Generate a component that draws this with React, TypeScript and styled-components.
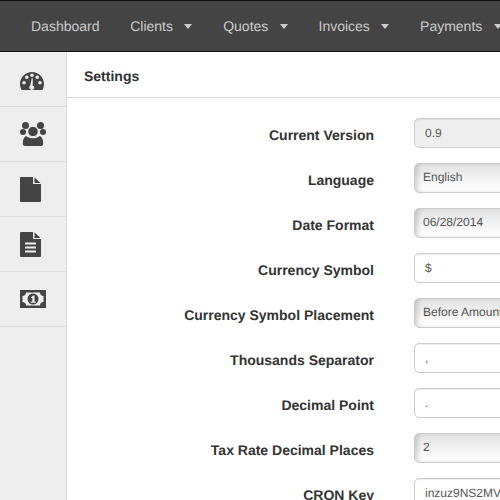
import * as React from "react";
import styled, { createGlobalStyle } from "styled-components";

const GlobalStyle = createGlobalStyle`
    html, body {
        margin: 0;
        padding: 0;
        background: #fff;
        font-family: "Liberation Sans", Arial, sans-serif;
        text-rendering: geometricPrecision;
    }
`;

const Page = styled.div`
    width: 500px;
    height: 500px;
    overflow: hidden;
    display: flex;
    flex-direction: column;
`;

const Navbar = styled.div`
    height: 50px;
    flex: none;
    display: flex;
    align-items: center;
    gap: 30.7px;
    padding-left: 31px;
    background: #444;
    border-top: 1px solid #111;
    border-bottom: 1px solid #111;
    white-space: nowrap;
`;

const NavItem = styled.div`
    display: flex;
    align-items: center;
    gap: 11.5px;
    flex: none;
    font-size: 14px;
    color: #ccc;
`;

const Caret = styled.span`
    width: 0;
    height: 0;
    margin-top: 1px;
    border-left: 4.5px solid transparent;
    border-right: 4.5px solid transparent;
    border-top: 5px solid #ccc;
`;

const Body = styled.div`
    flex: 1;
    display: flex;
    min-height: 0;
`;

const Sidebar = styled.div`
    width: 66px;
    flex: none;
    background: #eee;
    border-right: 1px solid #ddd;
`;

const SideItem = styled.div`
    height: 54px;
    display: flex;
    align-items: center;
    padding-left: 20px;
    border-bottom: 1px solid #ddd;
    color: #444;
`;

const Main = styled.div`
    flex: 1;
    min-width: 0;
`;

const Header = styled.div`
    height: 43px;
    display: flex;
    align-items: center;
    padding: 2px 0 0 17px;
    border-bottom: 1px solid #ddd;
    font-size: 14px;
    font-weight: bold;
    color: #333;
`;

const Form = styled.div`
    display: flex;
    flex-direction: column;
    gap: 15px;
    padding-top: 20px;
`;

const Row = styled.div`
    display: flex;
    align-items: center;
    height: 30px;
    gap: 40px;
`;

const Label = styled.div`
    width: 307px;
    flex: none;
    padding-top: 4px;
    text-align: right;
    font-size: 14px;
    font-weight: bold;
    color: #333;
    white-space: nowrap;
`;

const Field = styled.div<{ $kind: "input" | "readonly" | "select" }>`
    width: 200px;
    height: 30px;
    flex: none;
    display: flex;
    align-items: center;
    box-sizing: border-box;
    padding-left: ${(p) => (p.$kind === "select" ? "8px" : "10px")};
    padding-bottom: ${(p) => (p.$kind === "select" ? "2px" : "0")};
    border: 1px solid #ccc;
    border-radius: 5px;
    font-size: 12px;
    color: #555;
    white-space: nowrap;
    overflow: hidden;
    background: ${(p) =>
        p.$kind === "input"
            ? "#fff"
            : p.$kind === "readonly"
              ? "#eee"
              : "linear-gradient(to bottom, #e2e2e2, #fcfcfc 85%)"};
    box-shadow: ${(p) =>
        p.$kind === "select"
            ? "inset 4px 0 4px -1px rgba(0, 0, 0, 0.14)"
            : "inset 0 1px 1px rgba(0, 0, 0, 0.075)"};
`;

const Icon = styled.svg`
    display: block;
    fill: currentColor;
`;

const Gauge = styled(Icon)`
    margin-top: 3px;
`;

const GaugeIcon = () => (
    <Gauge width="24" height="18" viewBox="0 0 24 18">
        <path
            fillRule="evenodd"
            d="M12 0C5.4 0 0 5.4 0 12c0 2.2.6 4.2 1.6 6h20.8c1-1.8 1.6-3.800 1.600-6C24 5.400 18.600 0 12 0zM4 12.500a1.800 1.800 0 1 1 0-3.600 1.800 1.800 0 0 1 0 3.600zM6.800 7a1.800 1.800 0 1 1 0-3.600 1.800 1.800 0 0 1 0 3.600zM12 5a1.800 1.800 0 1 1 0-3.600A1.800 1.800 0 0 1 12 5zm2.300 10.500a2.500 2.500 0 1 1-3.900-2.200l1.300-7 1.100.2-.1 7.100a2.500 2.500 0 0 1 1.600 1.900zM17.200 7a1.800 1.800 0 1 1 0-3.600 1.800 1.800 0 0 1 0 3.600zM20 12.500a1.800 1.800 0 1 1 0-3.600 1.800 1.800 0 0 1 0 3.600z"
        />
    </Gauge>
);

const GroupIcon = () => (
    <Icon width="26" height="24" viewBox="0 0 26 24">
        <circle cx="5.500" cy="3.500" r="3.500" />
        <circle cx="20.500" cy="3.500" r="3.500" />
        <circle cx="3" cy="10" r="3" />
        <circle cx="23" cy="10" r="3" />
        <circle cx="13" cy="9.500" r="5.200" stroke="#eee" strokeWidth="1" />
        <path d="M5 24c-1.500 0-2.200-1-2.200-2.500 0-3.500 1-6.500 3.400-7.500 1.600 1.500 3.900 2.300 6.800 2.300s5.200-.8 6.800-2.300c2.400 1 3.400 4 3.400 7.500 0 1.500-.7 2.500-2.200 2.500z" />
    </Icon>
);

const FileIcon = () => (
    <Icon width="21" height="25" viewBox="0 0 21 25">
        <path d="M0 1a1 1 0 0 1 1-1h12v7h8v17a1 1 0 0 1-1 1H1a1 1 0 0 1-1-1z" />
        <path d="M14.500 0.500l6 5.500h-6z" />
    </Icon>
);

const FileTextIcon = () => (
    <Icon width="21" height="25" viewBox="0 0 21 25">
        <path
            fillRule="evenodd"
            d="M0 1a1 1 0 0 1 1-1h12v7h8v17a1 1 0 0 1-1 1H1a1 1 0 0 1-1-1zM5 10.500v2h11v-2zM5 14.500v2h11v-2zM5 18.500v2h11v-2z"
        />
        <path d="M14.500 0.500l6 5.500h-6z" />
    </Icon>
);

const MoneyIcon = () => (
    <Icon width="26" height="18" viewBox="0 0 26 18">
        <path
            fillRule="evenodd"
            d="M0 0h26v18H0zM6 2.500c0 2-1.500 3.500-3.500 3.500v6C4.500 12 6 13.500 6 15.500h14c0-2 1.500-3.500 3.500-3.500V6C21.500 6 20 4.500 20 2.500z"
        />
        <path
            fillRule="evenodd"
            d="M13 3.500a5.500 5.500 0 1 0 0 11 5.500 5.500 0 0 0 0-11zM11 7.300l2.200-1.800h1.300v6h1.300v1.200h-5v-1.200h1.500V7.600l-.8.600z"
        />
    </Icon>
);

const menus = [
    { name: "Dashboard", caret: false },
    { name: "Clients", caret: true },
    { name: "Quotes", caret: true },
    { name: "Invoices", caret: true },
    { name: "Payments", caret: true },
];

const sideIcons = [GaugeIcon, GroupIcon, FileIcon, FileTextIcon, MoneyIcon];

type FieldKind = "input" | "readonly" | "select";

const settings: { label: string; value: string; kind: FieldKind }[] = [
    { label: "Current Version", value: "0.9", kind: "readonly" },
    { label: "Language", value: "English", kind: "select" },
    { label: "Date Format", value: "06/28/2014", kind: "select" },
    { label: "Currency Symbol", value: "$", kind: "input" },
    { label: "Currency Symbol Placement", value: "Before Amount", kind: "select" },
    { label: "Thousands Separator", value: ",", kind: "input" },
    { label: "Decimal Point", value: ".", kind: "input" },
    { label: "Tax Rate Decimal Places", value: "2", kind: "select" },
    { label: "CRON Key", value: "inzuz9NS2MVkL4", kind: "input" },
];

export default function App() {
    return (
        <Page>
            <GlobalStyle />
            <Navbar>
                {menus.map((m) => (
                    <NavItem key={m.name}>
                        {m.name}
                        {m.caret && <Caret />}
                    </NavItem>
                ))}
            </Navbar>
            <Body>
                <Sidebar>
                    {sideIcons.map((SideIcon, i) => (
                        <SideItem key={i}>
                            <SideIcon />
                        </SideItem>
                    ))}
                </Sidebar>
                <Main>
                    <Header>Settings</Header>
                    <Form>
                        {settings.map((s) => (
                            <Row key={s.label}>
                                <Label>{s.label}</Label>
                                <Field $kind={s.kind}>{s.value}</Field>
                            </Row>
                        ))}
                    </Form>
                </Main>
            </Body>
        </Page>
    );
}
